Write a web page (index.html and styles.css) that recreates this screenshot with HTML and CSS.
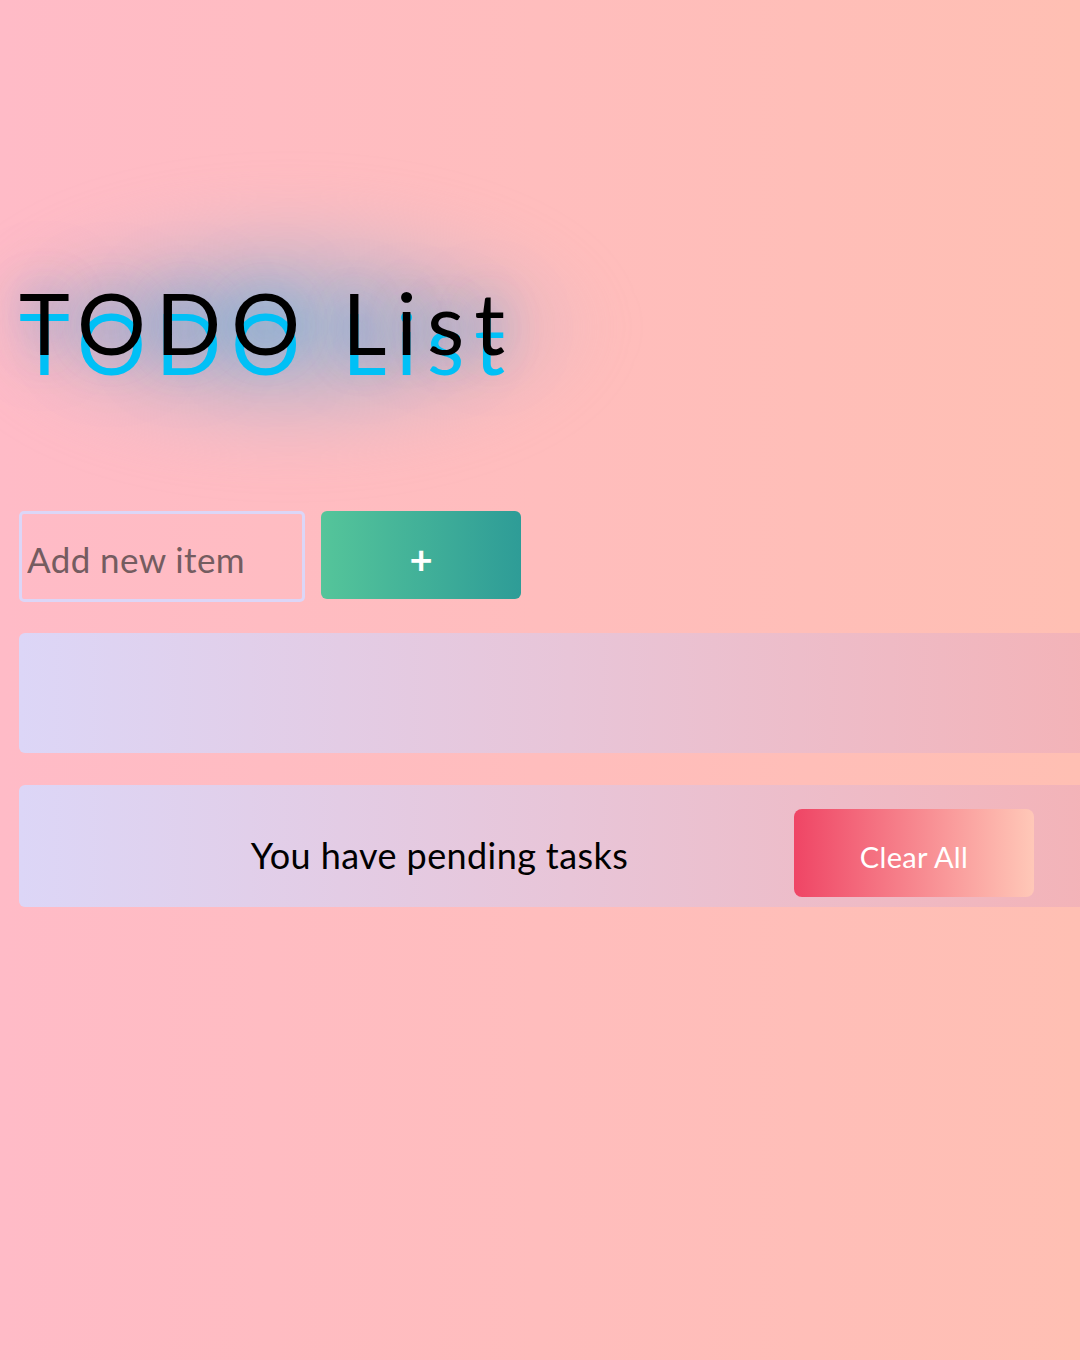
FILE: index.html
```html
<!DOCTYPE html>
<html>
<head>
<meta charset="utf-8">
<link rel="stylesheet" href="styles.css">
</head>
<body>
<div class="app">
  <h1 class="title">TODO List</h1>
  <div class="add-row">
    <input class="add-input" type="text" placeholder="Add new item">
    <button class="add-btn">+</button>
  </div>
  <ul class="list"></ul>
  <div class="footer">
    <span class="pending">You have pending tasks</span>
    <button class="clear-btn">Clear All</button>
  </div>
</div>
</body>
</html>
```
FILE: styles.css
```css
html, body {
  margin: 0;
  padding: 0;
}
body {
  width: 1080px;
  height: 1360px;
  overflow: hidden;
  background: linear-gradient(90deg, #ffbbc7 0%, #ffbfb3 100%);
  font-family: Lato, "Open Sans", sans-serif;
}
.app {
  padding: 0 0 0 19px;
  display: flex;
  flex-direction: column;
}
.title {
  position: relative;
  z-index: 0;
  margin: 272px 0 0 0;
  height: 200px;
  font-size: 86px;
  font-weight: 400;
  line-height: 100px;
  letter-spacing: 10px;
  color: #000;
  text-shadow: 0 20px 0 #00c0f6,
    0 0 40px rgba(0, 150, 230, 0.45),
    0 0 80px rgba(20, 140, 215, 0.45);
}
.title::before {
  content: "";
  position: absolute;
  z-index: -1;
  left: -60px;
  top: -90px;
  width: 660px;
  height: 290px;
  background: radial-gradient(closest-side, rgba(120, 185, 220, 0.6) 0%, rgba(150, 180, 210, 0.42) 40%, rgba(200, 185, 205, 0.2) 75%, rgba(255, 190, 200, 0) 100%);
  filter: blur(20px);
}
.add-row {
  margin-top: 39px;
  display: flex;
  gap: 16px;
  align-items: flex-start;
}
.add-input {
  box-sizing: border-box;
  width: 286px;
  height: 91px;
  border: 3px solid #dcd6f7;
  border-radius: 5px;
  background: transparent;
  padding: 4px 5px 0 5px;
  font-family: inherit;
  font-size: 35px;
  letter-spacing: 0.4px;
  color: #333;
  outline: none;
}
.add-input::placeholder {
  color: #745c60;
}
.add-btn {
  width: 200px;
  height: 88px;
  border: none;
  border-radius: 6px;
  background: linear-gradient(90deg, #55c59a 0%, #2e9c97 100%);
  color: #fff;
  font-family: inherit;
  font-size: 40px;
  font-weight: 700;
  padding: 0;
  padding-top: 8px;
}
.list {
  list-style: none;
  margin: 31px 0 0 0;
  padding: 0;
  width: 1100px;
  height: 120px;
  border-radius: 6px;
  background: linear-gradient(90deg, #dcd6f7 0%, #e8c5d8 50%, #f4b2b6 100%);
}
.footer {
  box-sizing: border-box;
  margin-top: 32px;
  width: 1100px;
  height: 122px;
  border-radius: 6px;
  background: linear-gradient(90deg, #dcd6f7 0%, #e8c5d8 50%, #f4b2b6 100%);
  display: flex;
  align-items: flex-end;
  padding: 0 0 10px 0;
}
.pending {
  width: 775px;
  text-align: center;
  font-size: 36px;
  letter-spacing: 0.4px;
  color: #000;
  padding-left: 66px;
  padding-bottom: 20px;
  box-sizing: border-box;
}
.clear-btn {
  width: 240px;
  height: 88px;
  border: none;
  border-radius: 8px;
  background: linear-gradient(90deg, #ef4565 0%, #ffc8b8 100%);
  color: #fff;
  font-family: inherit;
  font-size: 29px;
  letter-spacing: 0.3px;
  padding-top: 8px;
}
```
